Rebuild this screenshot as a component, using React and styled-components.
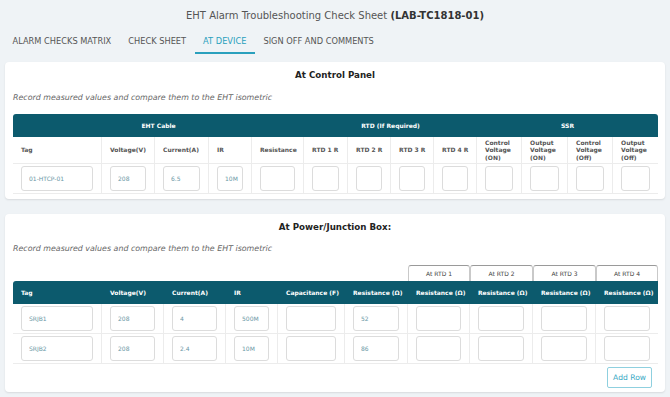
import React from 'react';
import styled, { createGlobalStyle } from 'styled-components';

const FONT = `"DejaVu Sans", Verdana, sans-serif`;
const TEAL = '#0c5a6d';

const Global = createGlobalStyle`
  html, body { margin: 0; padding: 0; background: #eff3f6; }
  body { font-family: ${FONT}; color: #333; }
  * { box-sizing: border-box; }
`;

const Page = styled.div`
  width: 670px;
  height: 397px;
  overflow: hidden;
  background: #eff3f6;
`;

const Title = styled.h1`
  margin: 0;
  padding-top: 8px;
  line-height: 16px;
  font-size: 10px;
  font-weight: 400;
  text-align: center;
  color: #555;
  b { color: #333; font-weight: 700; }
`;

const Tabs = styled.nav`
  display: flex;
  margin-top: 5px;
  padding-left: 4px;
`;

const Tab = styled.div`
  padding: 6px 8.5px 5px;
  line-height: 12px;
  font-size: 8.25px;
  color: ${p => (p.$active ? '#2aa0bd' : '#555')};
  border-bottom: 2px solid ${p => (p.$active ? '#2aa0bd' : 'transparent')};
  white-space: nowrap;
`;

const Card = styled.section`
  margin: ${p => p.$top}px 5px 0;
  padding: 5px 8px ${p => p.$bottom}px;
  background: #fff;
  border-radius: 4px;
  box-shadow: 0 1px 2px rgba(0, 0, 0, 0.1);
`;

const CardTitle = styled.h2`
  margin: 0;
  line-height: 16px;
  font-size: 8.7px;
  font-weight: 700;
  text-align: center;
  color: #222;
`;

const Note = styled.p`
  margin: ${p => p.$mt}px 0 0;
  line-height: 14px;
  font-size: 7.9px;
  font-style: italic;
  color: #666;
`;

const Table = styled.table`
  width: 100%;
  margin-top: 9px;
  border-collapse: separate;
  border-spacing: 0;
  table-layout: fixed;
`;

const GroupHead = styled.th`
  height: 23px;
  padding: 0;
  background: ${TEAL};
  color: #fff;
  font-size: 6px;
  font-weight: 700;
  text-align: center;
  &:first-child { border-top-left-radius: 3px; }
  &:last-child { border-top-right-radius: 3px; }
`;

const ColHead = styled.th`
  height: 27px;
  padding: 0 2px 0 8px;
  font-size: 6px;
  line-height: 7.5px;
  font-weight: 700;
  text-align: left;
  color: #555;
  border-bottom: 1px solid #ececec;
  &:not(:last-child) { border-right: 1px solid #ececec; }
`;

const BandHead = styled.th`
  height: 23px;
  padding: 0 8px;
  background: ${TEAL};
  color: #fff;
  font-size: 6px;
  font-weight: 700;
  text-align: left;
  white-space: nowrap;
  &:first-child { border-top-left-radius: 3px; }
`;

const RtdTab = styled.th`
  height: 16px;
  padding: 0;
  background: #fff;
  border: 1px solid #c9c9c9;
  border-top-color: #9a9a9a;
  border-bottom: none;
  border-radius: 3px 3px 0 0;
  font-size: 6px;
  font-weight: 400;
  color: #444;
  text-align: center;
`;

const Spacer = styled.td`
  padding: 0;
`;

const Cell = styled.td`
  height: 30px;
  padding: 0 8px;
  vertical-align: middle;
  border-bottom: 1px solid #ececec;
  &:not(:last-child) { border-right: 1px solid #ececec; }
`;

const Field = styled.input`
  display: block;
  width: 100%;
  height: 25px;
  margin: 0;
  padding: 0 3px 0 7px;
  border: 1px solid #dcdcdc;
  border-radius: 3px;
  background: #fff;
  font-family: ${FONT};
  font-size: 6px;
  color: #6a97a5;
  outline: none;
`;

const Footer = styled.div`
  display: flex;
  justify-content: flex-end;
  margin-top: 3px;
  padding-right: 5px;
`;

const AddButton = styled.button`
  height: 21px;
  padding: 0 5px;
  border: 1px solid #8fd0df;
  border-radius: 2px;
  background: #fff;
  font-family: ${FONT};
  font-size: 7.6px;
  color: #3aa9c4;
`;

const cpWidths = [89, 53, 54, 43, 52, 44, 43, 43, 43, 45, 46, 45, 45];
const cpHeads = [
  'Tag', 'Voltage(V)', 'Current(A)', 'IR', 'Resistance',
  'RTD 1 R', 'RTD 2 R', 'RTD 3 R', 'RTD 4 R',
  'Control Voltage (ON)', 'Output Voltage (ON)', 'Control Voltage (Off)', 'Output Voltage (Off)',
];
const cpRow = ['01-HTCP-01', '208', '6.5', '10M', '', '', '', '', '', '', '', '', ''];

const jbWidths = [89, 62, 62, 52, 67, 63, 62, 63, 63, 62];
const jbHeads = [
  'Tag', 'Voltage(V)', 'Current(A)', 'IR', 'Capacitance (F)', 'Resistance (Ω)',
  'Resistance (Ω)', 'Resistance (Ω)', 'Resistance (Ω)', 'Resistance (Ω)',
];
const jbRows = [
  ['SRJB1', '208', '4', '500M', '', '52', '', '', '', ''],
  ['SRJB2', '208', '2.4', '10M', '', '86', '', '', '', ''],
];

function Cols({ widths }) {
  return (
    <colgroup>
      {widths.map((w, i) => (
        <col key={i} style={{ width: w }} />
      ))}
    </colgroup>
  );
}

function DataRow({ values }) {
  return (
    <tr>
      {values.map((v, i) => (
        <Cell key={i}>
          <Field defaultValue={v} readOnly />
        </Cell>
      ))}
    </tr>
  );
}

export default function App() {
  return (
    <Page>
      <Global />
      <Title>
        EHT Alarm Troubleshooting Check Sheet <b>(LAB-TC1818-01)</b>
      </Title>
      <Tabs>
        <Tab>ALARM CHECKS MATRIX</Tab>
        <Tab>CHECK SHEET</Tab>
        <Tab $active>AT DEVICE</Tab>
        <Tab>SIGN OFF AND COMMENTS</Tab>
      </Tabs>

      <Card $top={8} $bottom={5}>
        <CardTitle>At Control Panel</CardTitle>
        <Note $mt={8}>Record measured values and compare them to the EHT isometric</Note>
        <Table>
          <Cols widths={cpWidths} />
          <thead>
            <tr>
              <GroupHead colSpan={5}>EHT Cable</GroupHead>
              <GroupHead colSpan={4}>RTD (If Required)</GroupHead>
              <GroupHead colSpan={4}>SSR</GroupHead>
            </tr>
            <tr>
              {cpHeads.map((h, i) => (
                <ColHead key={i}>{h}</ColHead>
              ))}
            </tr>
          </thead>
          <tbody>
            <DataRow values={cpRow} />
          </tbody>
        </Table>
      </Card>

      <Card $top={15} $bottom={4}>
        <CardTitle>At Power/Junction Box:</CardTitle>
        <Note $mt={7}>Record measured values and compare them to the EHT isometric</Note>
        <Table>
          <Cols widths={jbWidths} />
          <thead>
            <tr>
              <Spacer colSpan={6} />
              <RtdTab>At RTD 1</RtdTab>
              <RtdTab>At RTD 2</RtdTab>
              <RtdTab>At RTD 3</RtdTab>
              <RtdTab>At RTD 4</RtdTab>
            </tr>
            <tr>
              {jbHeads.map((h, i) => (
                <BandHead key={i}>{h}</BandHead>
              ))}
            </tr>
          </thead>
          <tbody>
            {jbRows.map((r, i) => (
              <DataRow key={i} values={r} />
            ))}
          </tbody>
        </Table>
        <Footer>
          <AddButton type="button">Add Row</AddButton>
        </Footer>
      </Card>
    </Page>
  );
}
